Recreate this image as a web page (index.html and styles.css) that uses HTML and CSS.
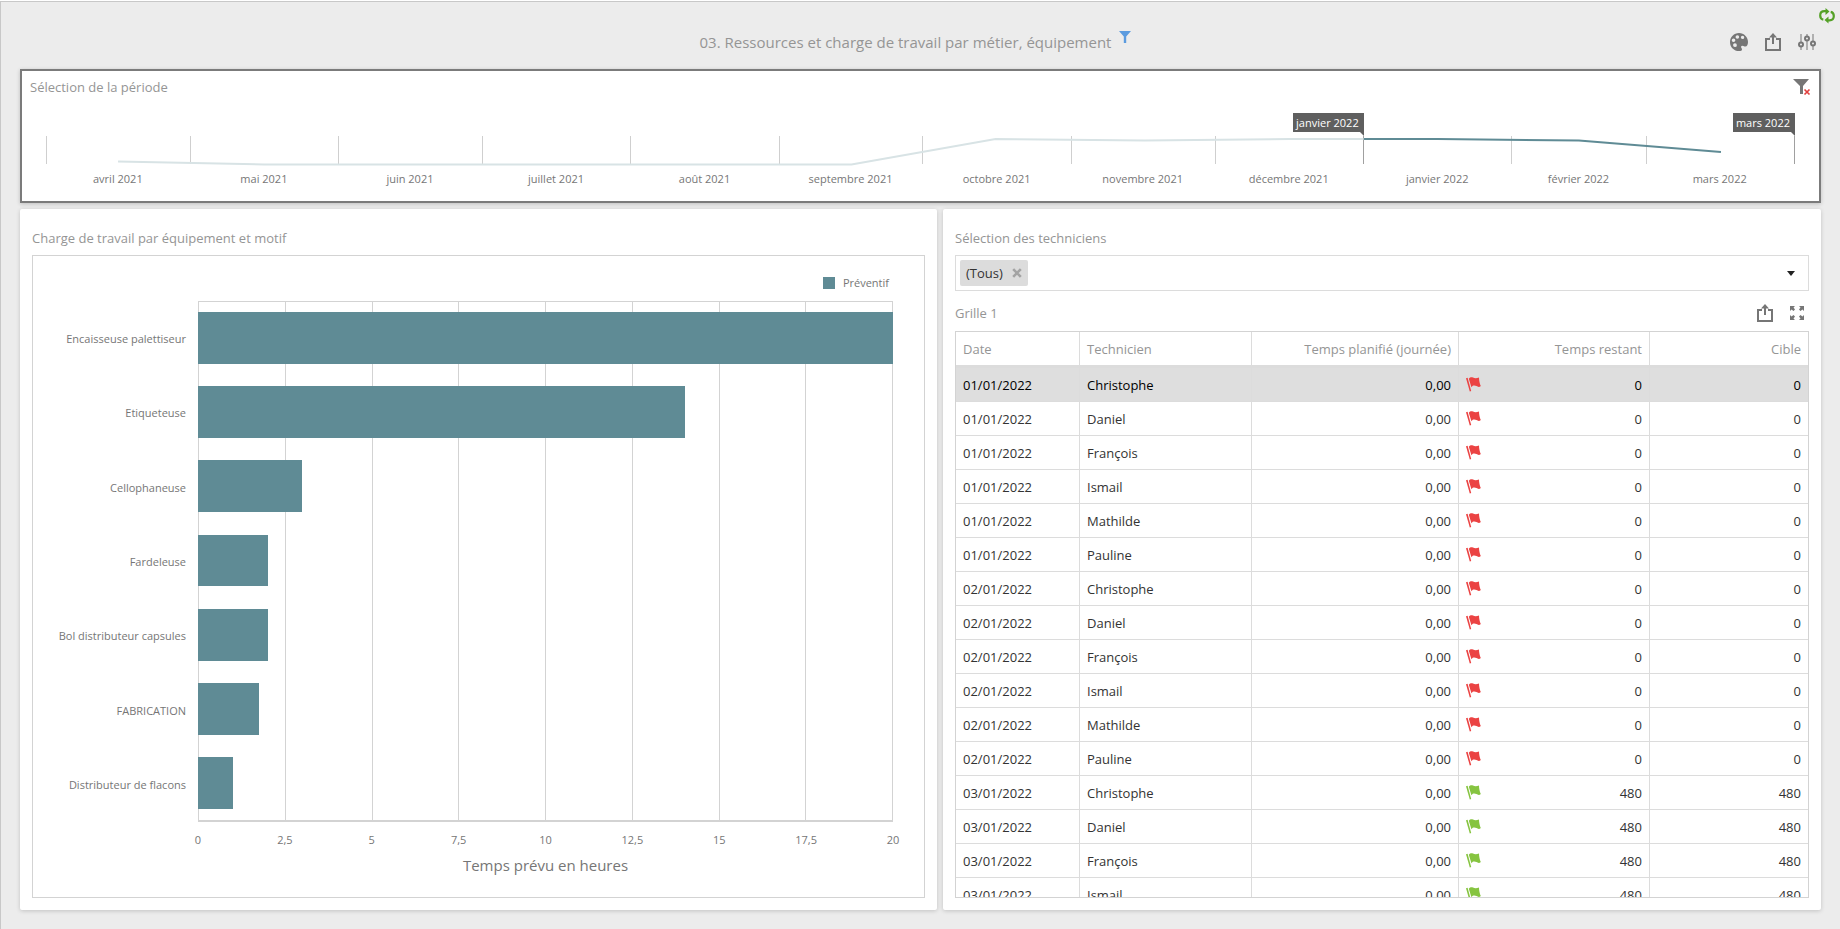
FILE: index.html
```
<!DOCTYPE html>
<html lang="fr">
<head>
<meta charset="utf-8">
<title>Ressources et charge de travail</title>
<link rel="stylesheet" href="styles.css">
</head>
<body>
<svg class="defs" aria-hidden="true">
  <symbol id="i-funnel" viewBox="0 0 15 15"><path d="M0 0H15L9 7V15H6V7Z"/></symbol>
  <symbol id="i-share" viewBox="0 0 16 18"><path d="M5 6H1V17H15V6H11" fill="none" stroke="currentColor" stroke-width="2"/><path d="M8 0L12 4.500H9V11H7V4.500H4Z"/></symbol>
  <symbol id="i-palette" viewBox="0 0 18 18"><path fill-rule="evenodd" d="M9 0C4 0 0 4 0 9.200C0 14.300 4 18 9 18C10.800 18 12 17.300 12 16.400C12 15.300 10.800 14.900 11.100 13.600C11.500 12.300 13.200 13 14.600 13.400C16.800 14 18 12 18 9C18 4 14 0 9 0ZM7.400 2.200A1.800 1.800 0 1 1 7.300 5.800A1.800 1.800 0 1 1 7.400 2.200ZM12.600 2.700A1.700 1.700 0 1 1 12.500 6.100A1.700 1.700 0 1 1 12.600 2.700ZM3.600 5.400A1.800 1.800 0 1 1 3.500 9A1.800 1.800 0 1 1 3.600 5.400ZM5 10.200A1.900 1.900 0 1 1 4.900 14A1.900 1.900 0 1 1 5 10.200Z"/></symbol>
  <symbol id="i-sliders" viewBox="0 0 18 16"><path d="M3 0V8M3 13V16M9 0V2M9 7V16M15 0V7M15 12V16" stroke="currentColor" stroke-width="2" opacity=".5"/><g fill="none" stroke="currentColor" stroke-width="2"><circle cx="3" cy="10.500" r="2"/><circle cx="9" cy="4.500" r="2"/><circle cx="15" cy="9.500" r="2"/></g></symbol>
  <symbol id="i-expand" viewBox="0 0 14 14"><path d="M0 0H5L3.500 1.500L5 3.500L3.500 5L1.500 3.500L0 5ZM14 0V5L12.500 3.500L10.500 5L9 3.500L10.500 1.500L9 0ZM0 14V9L1.500 10.500L3.500 9L5 10.500L3.500 12.500L5 14ZM14 14H9L10.500 12.500L9 10.500L10.500 9L12.500 10.500L14 9Z"/></symbol>
  <symbol id="i-flag" viewBox="0 0 15 15"><path d="M0 1.200L1.600 .7L5.200 14L3.800 14.500Z"/><path d="M2.800 1.800C4 .3 5.500 0 7 .6C8.500 1.300 10.500 1.600 13 .4C13 3.500 13.700 6.500 14.800 9C13.500 10.300 11.800 10 10.500 9.100C8.800 8.300 6.800 8.100 5.400 10.200Z"/></symbol>
</svg>
<div class="page">
  <button class="sync" type="button" aria-label="Actualiser"><svg width="16" height="16" viewBox="0 0 16 16"><path d="M8 3.200H5.500C2.500 3.200 1.200 5.200 1.200 7.500C1.200 9.700 2.300 11.200 4.300 11.600M8 12.300H10.500C13.500 12.300 14.800 10.300 14.800 8C14.800 5.800 13.700 4.300 11.700 3.900" fill="none" stroke="currentColor" stroke-width="2.200"/><path d="M6.500 0L10.500 3.500L6.500 7ZM9.500 8.500V15.500L5.500 12Z"/></svg></button>
  <header class="topbar">
    <h1 class="title">03. Ressources et charge de travail par métier, équipement</h1>
    <svg class="title-filter" width="12" height="12"><use href="#i-funnel"/></svg>
    <div class="tools">
      <button type="button" aria-label="Couleurs"><svg width="18" height="18"><use href="#i-palette"/></svg></button>
      <button type="button" aria-label="Exporter"><svg width="16" height="18"><use href="#i-share"/></svg></button>
      <button type="button" aria-label="Paramètres"><svg width="18" height="16"><use href="#i-sliders"/></svg></button>
    </div>
  </header>

  <section class="period">
    <div class="period-head">
      <h2 class="caption">Sélection de la période</h2>
      <button type="button" aria-label="Effacer le filtre"><svg width="18" height="18" viewBox="0 0 18 18"><path d="M0 0H16L10 7V15H7V7Z"/><path d="M11.500 10.500L16.500 15.500M16.500 10.500L11.500 15.500" stroke="#e2403f" stroke-width="1.700"/></svg></button>
    </div>
    <div class="range">
      <div class="months">
        <div class="m30">avril 2021</div><div class="m31">mai 2021</div><div class="m30">juin 2021</div><div class="m31">juillet 2021</div><div class="m31">août 2021</div><div class="m30">septembre 2021</div><div class="m31">octobre 2021</div><div class="m30">novembre 2021</div><div class="m31">décembre 2021</div><div class="m31 month-selected">janvier 2022</div><div class="m28">février 2022</div><div class="m31">mars 2022</div>
      </div>
      <svg class="spark" viewBox="0 0 1748 30" preserveAspectRatio="none">
        <path class="spark-off" d="M72 25.500L218 28.500H805L949 3L1098 4.500L1243 3H1317"/>
        <path class="spark-on" d="M1317 3H1391L1532 4.500L1674 16"/>
      </svg>
      <span class="marker marker-start">janvier 2022</span>
      <span class="marker marker-end">mars 2022</span>
    </div>
  </section>

  <main class="columns">
    <section class="card">
      <h2 class="caption">Charge de travail par équipement et motif</h2>
      <div class="chart">
        <div class="legend"><i></i>Préventif</div>
        <div class="labels">
          <span>Encaisseuse palettiseur</span><span>Etiqueteuse</span><span>Cellophaneuse</span><span>Fardeleuse</span><span>Bol distributeur capsules</span><span>FABRICATION</span><span>Distributeur de flacons</span>
        </div>
        <div class="plot">
          <div class="gridlines"><i></i><i></i><i></i><i></i><i></i><i></i><i></i><i></i></div>
          <div class="bars">
            <div><i style="width:100%"></i></div>
            <div><i style="width:70%"></i></div>
            <div><i style="width:15%"></i></div>
            <div><i style="width:10%"></i></div>
            <div><i style="width:10%"></i></div>
            <div><i style="width:8.75%"></i></div>
            <div><i style="width:5%"></i></div>
          </div>
        </div>
        <div class="ticks"><span>0</span><span>2,5</span><span>5</span><span>7,5</span><span>10</span><span>12,5</span><span>15</span><span>17,5</span><span>20</span></div>
        <div class="axis-title">Temps prévu en heures</div>
      </div>
    </section>

    <section class="card">
      <label class="caption" for="tech">Sélection des techniciens</label>
      <div class="tagbox">
        <span class="tag">(Tous)<button type="button" aria-label="Retirer"><svg width="10" height="10" viewBox="0 0 10 10"><path d="M1.200 1.200L8.800 8.800M8.800 1.200L1.200 8.800" stroke="currentColor" stroke-width="2.600"/></svg></button></span>
        <input id="tech" type="text" autocomplete="off">
        <button class="drop" type="button" aria-label="Ouvrir la liste"><svg width="8" height="5" viewBox="0 0 8 5"><path d="M0 0H8L4 5Z"/></svg></button>
      </div>
      <div class="grid-head">
        <h2 class="caption">Grille 1</h2>
        <button type="button" aria-label="Exporter la grille"><svg width="16" height="18"><use href="#i-share"/></svg></button>
        <button type="button" aria-label="Agrandir"><svg width="14" height="14"><use href="#i-expand"/></svg></button>
      </div>
      <div class="grid-box">
        <table>
          <colgroup><col class="c-date"><col class="c-tech"><col class="c-plan"><col class="c-rest"><col class="c-target"></colgroup>
          <thead><tr><th>Date</th><th>Technicien</th><th class="num">Temps planifié (journée)</th><th class="num">Temps restant</th><th class="num">Cible</th></tr></thead>
          <tbody>
            <tr class="selected"><td>01/01/2022</td><td>Christophe</td><td class="num">0,00</td><td class="num"><svg class="flag red"><use href="#i-flag"/></svg>0</td><td class="num">0</td></tr>
            <tr><td>01/01/2022</td><td>Daniel</td><td class="num">0,00</td><td class="num"><svg class="flag red"><use href="#i-flag"/></svg>0</td><td class="num">0</td></tr>
            <tr><td>01/01/2022</td><td>François</td><td class="num">0,00</td><td class="num"><svg class="flag red"><use href="#i-flag"/></svg>0</td><td class="num">0</td></tr>
            <tr><td>01/01/2022</td><td>Ismail</td><td class="num">0,00</td><td class="num"><svg class="flag red"><use href="#i-flag"/></svg>0</td><td class="num">0</td></tr>
            <tr><td>01/01/2022</td><td>Mathilde</td><td class="num">0,00</td><td class="num"><svg class="flag red"><use href="#i-flag"/></svg>0</td><td class="num">0</td></tr>
            <tr><td>01/01/2022</td><td>Pauline</td><td class="num">0,00</td><td class="num"><svg class="flag red"><use href="#i-flag"/></svg>0</td><td class="num">0</td></tr>
            <tr><td>02/01/2022</td><td>Christophe</td><td class="num">0,00</td><td class="num"><svg class="flag red"><use href="#i-flag"/></svg>0</td><td class="num">0</td></tr>
            <tr><td>02/01/2022</td><td>Daniel</td><td class="num">0,00</td><td class="num"><svg class="flag red"><use href="#i-flag"/></svg>0</td><td class="num">0</td></tr>
            <tr><td>02/01/2022</td><td>François</td><td class="num">0,00</td><td class="num"><svg class="flag red"><use href="#i-flag"/></svg>0</td><td class="num">0</td></tr>
            <tr><td>02/01/2022</td><td>Ismail</td><td class="num">0,00</td><td class="num"><svg class="flag red"><use href="#i-flag"/></svg>0</td><td class="num">0</td></tr>
            <tr><td>02/01/2022</td><td>Mathilde</td><td class="num">0,00</td><td class="num"><svg class="flag red"><use href="#i-flag"/></svg>0</td><td class="num">0</td></tr>
            <tr><td>02/01/2022</td><td>Pauline</td><td class="num">0,00</td><td class="num"><svg class="flag red"><use href="#i-flag"/></svg>0</td><td class="num">0</td></tr>
            <tr><td>03/01/2022</td><td>Christophe</td><td class="num">0,00</td><td class="num"><svg class="flag green"><use href="#i-flag"/></svg>480</td><td class="num">480</td></tr>
            <tr><td>03/01/2022</td><td>Daniel</td><td class="num">0,00</td><td class="num"><svg class="flag green"><use href="#i-flag"/></svg>480</td><td class="num">480</td></tr>
            <tr><td>03/01/2022</td><td>François</td><td class="num">0,00</td><td class="num"><svg class="flag green"><use href="#i-flag"/></svg>480</td><td class="num">480</td></tr>
            <tr><td>03/01/2022</td><td>Ismail</td><td class="num">0,00</td><td class="num"><svg class="flag green"><use href="#i-flag"/></svg>480</td><td class="num">480</td></tr>
          </tbody>
        </table>
      </div>
    </section>
  </main>
</div>
</body>
</html>
```

FILE: styles.css
```
* { box-sizing: border-box; }
body { margin: 0; background: #fff; color: #767676; font: 13px/18px "Open Sans", "Noto Sans", sans-serif; }
h1, h2 { margin: 0; font-weight: 400; }
button { display: flex; padding: 0; border: 0; background: none; color: #767676; cursor: pointer; }
svg { display: block; fill: currentColor; }
.defs { position: absolute; width: 0; height: 0; }

.page { position: relative; display: flex; flex-direction: column; height: calc(100vh - 1px); margin-top: 1px; padding: 0 19px 19px 19px; border: solid #c8c8c8; border-width: 1px 0 0 1px; background: #ececec; }
.sync { position: absolute; top: 6px; right: 5px; color: #54a127; }
.topbar { display: grid; grid-template-columns: 1fr auto 12px 1fr; column-gap: 8px; align-items: center; height: 67px; padding: 12px 10px 0 0; }
.title { grid-column: 2; color: #959595; font-size: 15px; line-height: 22px; }
.title-filter { align-self: start; margin-top: 17px; color: #5b9bdf; }
.tools { display: flex; justify-content: flex-end; align-items: center; gap: 17px; margin-right: -5px; }
.caption { color: #959595; font-size: 13px; line-height: 18px; }

.period { flex: none; height: 134px; border: 2px solid #7b7b7b; background: #fff; box-shadow: 0 1px 4px rgba(0, 0, 0, .2); }
.period-head { display: flex; justify-content: space-between; align-items: flex-start; height: 42px; padding: 7px 8px 0; }
.period-head button { margin-top: 1px; }
.range { position: relative; margin: 0 24px; padding-top: 23px; }
.months { display: flex; height: 28px; border-right: 1px solid #a0a0a0; }
.months div { flex-basis: 0; padding-top: 34px; background: linear-gradient(#cfcfcf, #cfcfcf) 0 0 / 1px 28px no-repeat; font-size: 11px; line-height: 18px; text-align: center; white-space: nowrap; }
.months .month-selected { background-image: linear-gradient(#a0a0a0, #a0a0a0); }
.m28 { flex-grow: 28; }
.m30 { flex-grow: 30; }
.m31 { flex-grow: 31; }
.spark { position: absolute; top: 23px; left: 0; width: 100%; height: 30px; fill: none; stroke-width: 2; }
.spark path { vector-effect: non-scaling-stroke; }
.spark-off { stroke: #d8e3e5; }
.spark-on { stroke: #5f8b95; }
.marker { position: absolute; top: 0; padding: 0 5px 0 3px; background: #5f5f5f; color: #fff; font-size: 11px; line-height: 19px; white-space: nowrap; }
.marker::after { content: ""; position: absolute; top: 100%; right: 0; border: 0 solid transparent; border-top: 4px solid #5f5f5f; border-left-width: 4px; }
.marker-start { right: 24.66%; }
.marker-end { right: 0; }

.columns { display: grid; grid-template-columns: 917fr 878fr; gap: 6px; flex: 1; min-height: 0; margin-top: 6px; }
.card { display: flex; flex-direction: column; min-width: 0; min-height: 0; padding: 20px 12px 12px; border-radius: 2px; background: #fff; box-shadow: 0 1px 4px rgba(0, 0, 0, .18); }
.chart { flex: 1; display: grid; grid-template: 45px 1fr 36px 39px / 153px 1fr; column-gap: 12px; margin-top: 8px; padding-right: 31px; border: 1px solid #d3d3d3; font-size: 11px; }
.legend { grid-column: 1 / -1; display: flex; align-items: center; justify-content: flex-end; gap: 8px; padding: 9px 4px 0 0; }
.legend i { width: 12px; height: 12px; background: #5f8b95; }
.labels { display: grid; grid-auto-rows: 1fr; align-items: center; padding-top: 1px; text-align: right; white-space: nowrap; }
.plot { position: relative; border: 1px solid #d3d3d3; border-bottom-width: 2px; }
.gridlines, .bars { position: absolute; inset: 0; display: grid; }
.gridlines { grid-template-columns: repeat(8, 1fr); margin-left: -1px; }
.gridlines i + i { border-left: 1px solid #d3d3d3; }
.bars { grid-auto-rows: 1fr; margin: -1px -1px 0; }
.bars div { display: flex; align-items: center; }
.bars i { height: 70%; background: #5f8b95; }
.ticks { grid-column: 2; display: flex; justify-content: space-between; align-items: center; }
.ticks span { display: flex; justify-content: center; width: 0; }
.axis-title { grid-column: 2; margin-top: -4px; font-size: 15px; line-height: 22px; text-align: center; }

.tagbox { display: flex; align-items: center; height: 36px; margin-top: 8px; padding: 0 13px 0 4px; border: 1px solid #dcdcdc; }
.tag { display: flex; align-items: center; gap: 9px; height: 26px; padding: 0 6px; border-radius: 2px; background: #dcdcdc; color: #333; }
.tag button { color: #a3a3a3; }
.tagbox input { flex: 1; min-width: 0; border: 0; outline: 0; background: none; font: inherit; }
.drop { color: #222; }
.grid-head { display: flex; align-items: center; gap: 17px; height: 40px; padding: 4px 5px 0 0; }
.grid-head .caption { flex: 1; }
.grid-box { flex: 1; min-height: 0; overflow: hidden; border: 1px solid #d3d3d3; }
table { width: 100%; table-layout: fixed; border-collapse: separate; border-spacing: 0; }
.c-date { width: 124px; }
.c-tech { width: 172px; }
.c-plan { width: 207px; }
.c-rest { width: 191px; }
th, td { height: 34px; padding: 0 7px; border: solid #dcdcdc; border-width: 0 1px 1px 0; text-align: left; white-space: nowrap; }
th:last-child, td:last-child { border-right: 0; }
th { height: 36px; border-bottom-width: 3px; color: #959595; font-weight: 400; }
td { color: #333; }
.num { text-align: right; }
.selected td { background: #dedede; color: #000; }
.flag { float: left; width: 15px; height: 15px; margin-top: 1px; }
.red { color: #eb4343; }
.green { color: #86c440; }
```
